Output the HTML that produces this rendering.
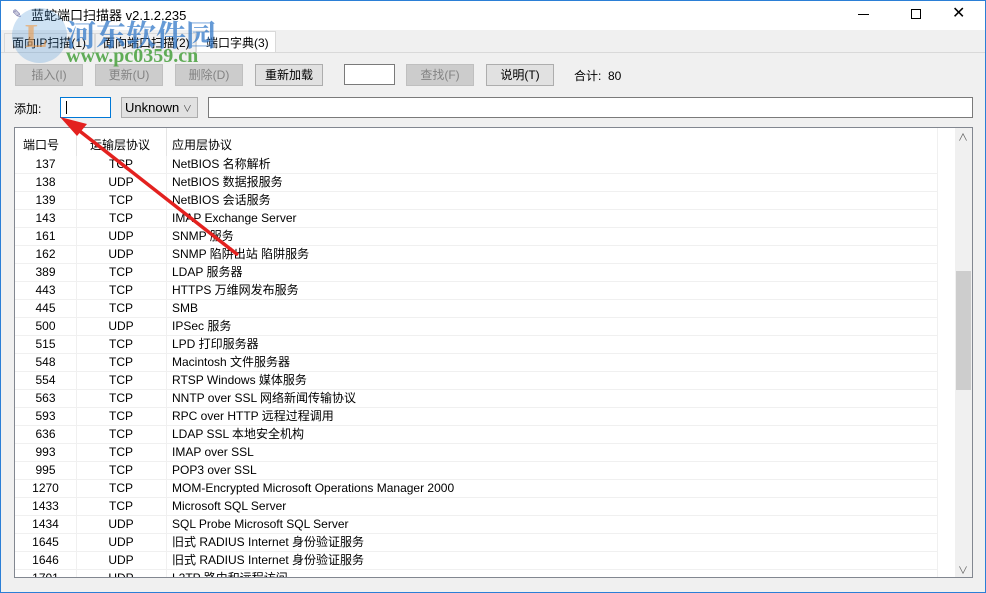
<!DOCTYPE html>
<html><head><meta charset="utf-8">
<style>
*{box-sizing:border-box;margin:0;padding:0}
body{width:986px;height:593px;overflow:hidden;background:#f0f0f0;font-family:"Liberation Sans","Noto Sans CJK SC",sans-serif;font-size:12px;color:#000;position:relative}
.win{position:absolute;left:0;top:0;width:986px;height:593px;border:1px solid #2b7fd6}
.title{position:absolute;left:1px;top:1px;width:984px;height:29px;background:#fff}
.abs{position:absolute}
.btn{position:absolute;height:22px;border:1px solid #adadad;background:#e1e1e1;text-align:center;line-height:20px;font-size:12px}
.dis{background:#cccccc;border-color:#bfbfbf;color:#838383}
.list{position:absolute;left:14px;top:127px;width:959px;height:451px;border:1px solid #828790;background:#fff;overflow:hidden}
.row{position:absolute;left:0;height:18px;width:923px;border-bottom:1px solid #f0f0f0;font-size:12px;line-height:17px}
.row span{position:absolute;top:0}
.c1{left:0;width:61px;text-align:center}
.c2{left:61px;width:90px;text-align:center}
.c3{left:157px}
.vl{position:absolute;top:0;width:1px;height:451px;background:#f0f0f0}
</style></head><body>
<div class="win"></div>
<div class="title"></div>
<div class="abs" style="left:12px;top:7px;width:12px;height:14px;font-size:12px;color:#6a6aa0">✎</div>
<div class="abs" style="left:31px;top:5px;font-size:13px;color:#000">蓝蛇端口扫描器 v2.1.2.235</div>
<div class="abs" style="left:858px;top:14px;width:11px;height:1px;background:#000"></div>
<div class="abs" style="left:911px;top:9px;width:10px;height:10px;border:1px solid #000"></div>
<div class="abs" style="left:952px;top:3px;font-size:16px;color:#000">✕</div>

<div class="abs" style="left:4px;top:33px;width:91px;height:19px;border:1px solid #d9d9d9;border-bottom:none;background:#f0f0f0;font-size:12px;line-height:18px;padding-left:7px">面向IP扫描(1)</div>
<div class="abs" style="left:95px;top:33px;width:101px;height:19px;border:1px solid #d9d9d9;border-bottom:none;background:#f0f0f0;font-size:12px;line-height:18px;padding-left:7px">面向端口扫描(2)</div>
<div class="abs" style="left:196px;top:31px;width:80px;height:22px;border:1px solid #d9d9d9;border-bottom:none;background:#fff;font-size:12px;line-height:22px;padding-left:9px">端口字典(3)</div>
<div class="abs" style="left:1px;top:52px;width:984px;height:1px;background:#d9d9d9"></div>

<div class="btn dis" style="left:15px;top:64px;width:68px">插入(I)</div>
<div class="btn dis" style="left:95px;top:64px;width:68px">更新(U)</div>
<div class="btn dis" style="left:175px;top:64px;width:68px">删除(D)</div>
<div class="btn" style="left:255px;top:64px;width:68px">重新加载</div>
<div class="abs" style="left:344px;top:64px;width:51px;height:21px;border:1px solid #7a7a7a;background:#fff"></div>
<div class="btn dis" style="left:406px;top:64px;width:68px">查找(F)</div>
<div class="btn" style="left:486px;top:64px;width:68px">说明(T)</div>
<div class="abs" style="left:574px;top:67px">合计:&nbsp; 80</div>

<div class="abs" style="left:14px;top:100px">添加:</div>
<div class="abs" style="left:60px;top:97px;width:51px;height:21px;border:1px solid #0078d7;background:#fff"><div style="position:absolute;left:5px;top:3px;width:1px;height:13px;background:#000"></div></div>
<div class="abs" style="left:121px;top:97px;width:77px;height:21px;border:1px solid #adadad;background:#e1e1e1;font-size:13px;line-height:19px;padding-left:3px">Unknown <span style="font-size:9px;color:#444">&#x2228;</span></div>
<div class="abs" style="left:208px;top:97px;width:765px;height:21px;border:1px solid #7a7a7a;background:#fff"></div>

<div class="list" id="list">
 <div class="abs" style="left:0;top:0;width:923px;height:28px;background:#fff"></div>
 <div class="abs" style="left:8px;top:8px">端口号</div>
 <div class="abs" style="left:75px;top:8px">运输层协议</div>
 <div class="abs" style="left:157px;top:8px">应用层协议</div>
 <div class="vl" style="left:61px;height:28px;background:#e5e5e5"></div>
 <div class="vl" style="left:151px;height:28px;background:#e5e5e5"></div>
 <div class="vl" style="left:922px"></div>
 <div class="vl" style="left:61px;top:28px"></div>
 <div class="vl" style="left:151px;top:28px"></div>
 <div class="abs" style="left:940px;top:0;width:17px;height:449px;background:#f0f0f0"></div>
 <div class="abs" style="left:941px;top:143px;width:15px;height:119px;background:#cdcdcd"></div>
 <div class="abs" style="left:943px;top:1px;font-size:10px;color:#606060">&#x2227;</div>
 <div class="abs" style="left:943px;top:434px;font-size:10px;color:#606060">&#x2228;</div>
</div>

<div class="abs" style="left:12px;top:8px;width:55px;height:55px;border-radius:50%;background:rgba(60,140,210,0.25)"></div>
<div class="abs" style="left:25px;top:18px;font-size:34px;font-weight:bold;color:rgba(240,150,60,0.55);font-family:'Liberation Serif',serif">L</div>
<div class="abs" style="left:66px;top:11px;font-size:30px;font-weight:bold;color:rgba(50,120,200,0.75);font-family:'Liberation Serif','Noto Serif CJK SC',serif;letter-spacing:0px">河东软件园</div>
<div class="abs" style="left:66px;top:45px;font-size:20px;font-weight:bold;color:rgba(70,160,60,0.85);font-family:'Liberation Serif',serif">www.pc0359.cn</div>

<svg class="abs" style="left:0;top:0" width="986" height="593">
<line x1="238" y1="255" x2="72" y2="125" stroke="#e3211f" stroke-width="3.5"/>
<polygon points="60,117 87,124 77,136" fill="#e3211f"/>
</svg>

<script>
var d=[["137","TCP","NetBIOS 名称解析"],["138","UDP","NetBIOS 数据报服务"],["139","TCP","NetBIOS 会话服务"],["143","TCP","IMAP Exchange Server"],["161","UDP","SNMP 服务"],["162","UDP","SNMP 陷阱出站 陷阱服务"],["389","TCP","LDAP 服务器"],["443","TCP","HTTPS 万维网发布服务"],["445","TCP","SMB"],["500","UDP","IPSec 服务"],["515","TCP","LPD 打印服务器"],["548","TCP","Macintosh 文件服务器"],["554","TCP","RTSP Windows 媒体服务"],["563","TCP","NNTP over SSL 网络新闻传输协议"],["593","TCP","RPC over HTTP 远程过程调用"],["636","TCP","LDAP SSL 本地安全机构"],["993","TCP","IMAP over SSL"],["995","TCP","POP3 over SSL"],["1270","TCP","MOM-Encrypted Microsoft Operations Manager 2000"],["1433","TCP","Microsoft SQL Server"],["1434","UDP","SQL Probe Microsoft SQL Server"],["1645","UDP","旧式 RADIUS Internet 身份验证服务"],["1646","UDP","旧式 RADIUS Internet 身份验证服务"],["1701","UDP","L2TP 路由和远程访问"]];
var l=document.getElementById('list'),h='';
d.forEach(function(r,i){h+='<div class="row" style="top:'+(28+i*18)+'px"><span class="c1">'+r[0]+'</span><span class="c2">'+r[1]+'</span><span class="c3">'+r[2]+'</span></div>';});
l.insertAdjacentHTML('afterbegin',h);
</script>
</body></html>
